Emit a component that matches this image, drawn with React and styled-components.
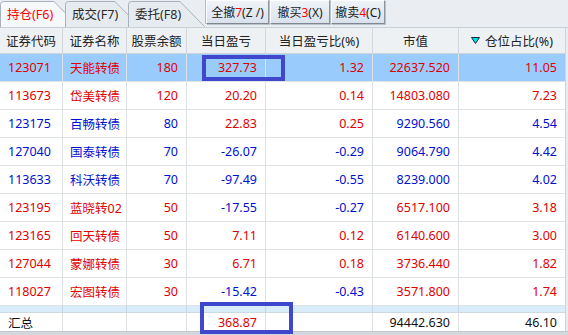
import styled, { createGlobalStyle } from 'styled-components';

const RED = '#e00000';
const BLUE = '#0010d0';

const GlobalStyle = createGlobalStyle`
  html, body {
    margin: 0;
    padding: 0;
    background: #e9edf1;
  }
  body {
    font-family: "Noto Sans", "Noto Sans CJK SC", sans-serif;
    font-size: 12px;
    color: #222;
  }
`;

const columns = '63px 64px 60px 79px 107px 86px 106px';

const rows = [
  { code: '123071', name: '天能转债', qty: 180, pnl: '327.73', ratio: '1.32', value: '22637.520', pct: '11.05', up: true, selected: true },
  { code: '113673', name: '岱美转债', qty: 120, pnl: '20.20', ratio: '0.14', value: '14803.080', pct: '7.23', up: true },
  { code: '123175', name: '百畅转债', qty: 80, pnl: '22.83', ratio: '0.25', value: '9290.560', pct: '4.54', up: false },
  { code: '127040', name: '国泰转债', qty: 70, pnl: '-26.07', ratio: '-0.29', value: '9064.790', pct: '4.42', up: false },
  { code: '113633', name: '科沃转债', qty: 70, pnl: '-97.49', ratio: '-0.55', value: '8239.000', pct: '4.02', up: false },
  { code: '123195', name: '蓝晓转02', qty: 50, pnl: '-17.55', ratio: '-0.27', value: '6517.100', pct: '3.18', up: true },
  { code: '123165', name: '回天转债', qty: 50, pnl: '7.11', ratio: '0.12', value: '6140.600', pct: '3.00', up: true },
  { code: '127044', name: '蒙娜转债', qty: 30, pnl: '6.71', ratio: '0.18', value: '3736.440', pct: '1.82', up: true },
  { code: '118027', name: '宏图转债', qty: 30, pnl: '-15.42', ratio: '-0.43', value: '3571.800', pct: '1.74', up: true },
];

const headers = ['证券代码', '证券名称', '股票余额', '当日盈亏', '当日盈亏比(%)', '市值'];

function TabShape({ width, active }) {
  return (
    <TabSvg width={width} height="27" viewBox={`0 0 ${width} 27`}>
      <path
        d={`M0.5,27 V4.5 Q0.5,1.5 3.5,1.5 H${width - 25} L${width - 0.5},26.5`}
        fill={active ? '#f6f8fa' : '#e6ebf0'}
        stroke="#a7b1bb"
      />
    </TabSvg>
  );
}

function SortArrow() {
  return (
    <svg width="9" height="7" viewBox="0 0 9 7">
      <polygon points="0.5,0.5 8.5,0.5 4.5,6.5" fill="#00e2e8" stroke="#0a2a3a" strokeWidth="1" />
    </svg>
  );
}

function App() {
  return (
    <>
      <GlobalStyle />
      <Page>
        <TopBar>
          <Tabs>
            <Tab $w={79} $overlap={14}>
              <TabShape width={79} active />
              <TabLabel $active>持仓(F6)</TabLabel>
            </Tab>
            <Tab $w={75} $overlap={12}>
              <TabShape width={75} />
              <TabLabel>成交(F7)</TabLabel>
            </Tab>
            <Tab $w={77} $overlap={0}>
              <TabShape width={77} />
              <TabLabel>委托(F8)</TabLabel>
            </Tab>
          </Tabs>
          <Buttons>
            <ToolButton $w={63}>全撤<Hot>7</Hot>(Z /)</ToolButton>
            <ToolButton $w={60}>撤买<Hot>3</Hot>(X)</ToolButton>
            <ToolButton $w={54}>撤卖<Hot>4</Hot>(C)</ToolButton>
          </Buttons>
        </TopBar>

        <Grid>
          <HeaderRow>
            {headers.map((h) => (
              <HeadCell key={h}>{h}</HeadCell>
            ))}
            <HeadCell>
              <SortArrow />
              <span>仓位占比(%)</span>
            </HeadCell>
          </HeaderRow>

          {rows.map((r) => {
            const main = r.up ? RED : BLUE;
            const day = r.pnl.startsWith('-') ? BLUE : RED;
            return (
              <Row key={r.code} $selected={r.selected}>
                <Cell $color={main}>{r.code}</Cell>
                <Cell $color={main}>{r.name}</Cell>
                <Cell $color={main} $right>{r.qty}</Cell>
                <Cell $color={day} $right>{r.pnl}</Cell>
                <Cell $color={day} $right>{r.ratio}</Cell>
                <Cell $color={main} $right>{r.value}</Cell>
                <Cell $color={main} $right>{r.pct}</Cell>
              </Row>
            );
          })}

          <Spacer>
            {Array.from({ length: 7 }).map((_, i) => (
              <SpacerCell key={i} />
            ))}
          </Spacer>

          <TotalRow>
            <Cell $color="#111">汇总</Cell>
            <Cell />
            <Cell />
            <Cell $color={RED} $right>368.87</Cell>
            <Cell />
            <Cell $color="#111" $right>94442.630</Cell>
            <Cell $color="#111" $right>46.10</Cell>
          </TotalRow>
        </Grid>
        <BottomEdge />

        <Mark style={{ left: 202, top: 55, width: 83, height: 26 }} />
        <Mark style={{ left: 200, top: 302, width: 93, height: 32 }} />
      </Page>
    </>
  );
}

const Page = styled.div`
  position: relative;
  width: 568px;
  height: 335px;
  overflow: hidden;
  background: #e9edf1;
`;

const TopBar = styled.div`
  display: flex;
  align-items: flex-start;
  height: 28px;
  box-sizing: border-box;
  border-bottom: 1px solid #c9d0d7;
  background: #eaeef2;
`;

const Tabs = styled.div`
  display: flex;
  align-items: flex-end;
  height: 27px;
`;

const Tab = styled.div`
  position: relative;
  width: ${(p) => p.$w}px;
  height: 27px;
  margin-right: -${(p) => p.$overlap}px;
`;

const TabSvg = styled.svg`
  position: absolute;
  left: 0;
  top: 0;
  display: block;
`;

const TabLabel = styled.span`
  position: relative;
  display: block;
  padding: 6px 0 0 7px;
  line-height: 17px;
  font-size: 12.5px;
  color: ${(p) => (p.$active ? '#ff0000' : '#2a2a2a')};
  white-space: nowrap;
`;

const Buttons = styled.div`
  display: flex;
  gap: 1px;
  margin-left: 1px;
`;

const ToolButton = styled.div`
  width: ${(p) => p.$w}px;
  height: 24px;
  box-sizing: border-box;
  display: flex;
  align-items: center;
  justify-content: center;
  font-size: 12px;
  color: #1a1a1a;
  white-space: nowrap;
  background: linear-gradient(#eef3f8, #d9e2ec);
  border: 1px solid;
  border-color: #fbfcfd #8d969f #7f8891 #fbfcfd;
  box-shadow: 1px 1px 0 #b9c1c9, -1px 0 0 #b4bcc4;
`;

const Hot = styled.span`
  color: #ff0000;
`;

const Grid = styled.div`
  width: 565px;
  background: #fff;
  border-right: 1px solid #cfd4d9;
`;

const rowBase = `
  display: grid;
  grid-template-columns: ${columns};
  box-sizing: border-box;
`;

const HeaderRow = styled.div`
  ${rowBase}
  height: 26px;
  background: #eef1f4;
  border-bottom: 1px solid #cdd3d9;
`;

const HeadCell = styled.div`
  display: flex;
  align-items: center;
  justify-content: center;
  gap: 5px;
  border-right: 1px solid #d3d8dd;
  font-size: 12.5px;
  color: #222;
  white-space: nowrap;
  &:last-child {
    border-right: none;
  }
`;

const Row = styled.div`
  ${rowBase}
  height: 28px;
  background: ${(p) => (p.$selected ? '#99ccfd' : '#fff')};
  border-bottom: 1px solid #e0e3e6;
`;

const Cell = styled.div`
  display: flex;
  align-items: center;
  justify-content: ${(p) => (p.$right ? 'flex-end' : 'flex-start')};
  padding: 0 8px 0 8px;
  border-right: 1px solid #dfe2e5;
  color: ${(p) => p.$color || '#222'};
  font-size: 12.5px;
  white-space: nowrap;
  overflow: hidden;
  &:nth-child(2) {
    padding-left: 7px;
  }
  &:last-child {
    border-right: none;
  }
`;

const Spacer = styled.div`
  ${rowBase}
  height: 7px;
  background: #d9ecfa;
  border-bottom: 1px solid #cfd9e2;
`;

const SpacerCell = styled.div`
  border-right: 1px solid #c8d6e2;
  &:last-child {
    border-right: none;
  }
`;

const TotalRow = styled.div`
  ${rowBase}
  height: 18px;
  background: #fff;
`;

const BottomEdge = styled.div`
  height: 4px;
  background: #d3d8dd;
  border-top: 1px solid #c2c8ce;
`;

const Mark = styled.div`
  position: absolute;
  box-sizing: border-box;
  border: 4px solid #3f48cc;
  pointer-events: none;
`;

export default App;
